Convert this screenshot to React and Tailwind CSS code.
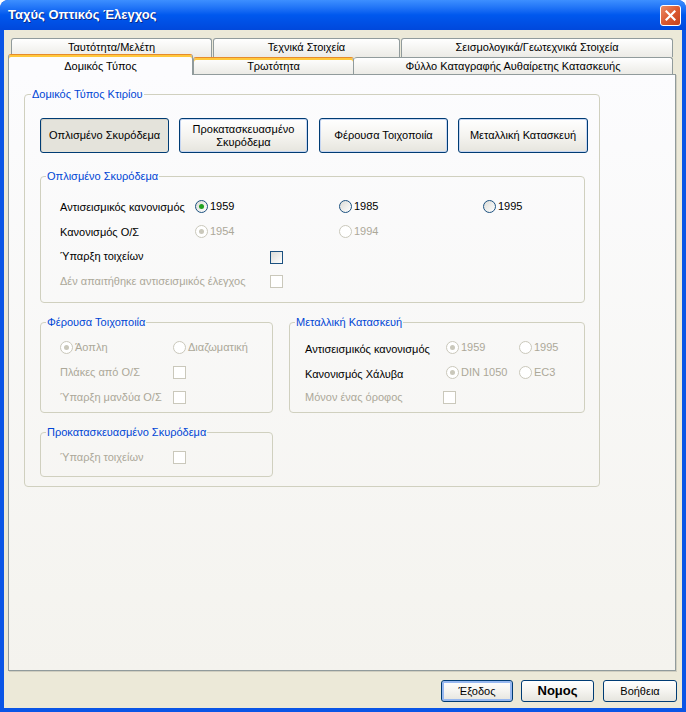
import React from "react";

function Radio({ checked, disabled, label, className = "" }) {
  return (
    <div className={`flex items-center ${className}`}>
      <span
        className={`w-[13px] h-[13px] rounded-full border flex items-center justify-center shrink-0 ${
          disabled
            ? "border-[#CAC8BB] bg-white"
            : "border-[#1C5180] bg-linear-to-br from-[#DCDCD7] to-white"
        }`}
      >
        {checked ? (
          <span
            className={`w-[5px] h-[5px] rounded-full ${
              disabled ? "bg-[#CAC8BB]" : "bg-[#21A121]"
            }`}
          />
        ) : null}
      </span>
      <span className={`ml-[2px] ${disabled ? "text-[#ACA899]" : "text-black"}`}>
        {label}
      </span>
    </div>
  );
}

function Check({ disabled }) {
  return (
    <span
      className={`block w-[13px] h-[13px] border shrink-0 ${
        disabled
          ? "border-[#CAC8BB] bg-white"
          : "border-[#1C5180] bg-linear-to-br from-[#DCDCD7] to-white"
      }`}
    />
  );
}

function Group({ title, className = "", children, legendClass = "ml-[5px]" }) {
  return (
    <fieldset className={`border border-[#D0D0BF] rounded-[4px] ${className}`}>
      <legend className={`${legendClass} px-[1px] text-[#0046D5] leading-[13px]`}>
        {title}
      </legend>
      {children}
    </fieldset>
  );
}

function Row({ children }) {
  return <div className="flex items-center h-[20px]">{children}</div>;
}

function BigButton({ children, pressed, className = "" }) {
  return (
    <div
      className={`h-[35px] shrink-0 flex items-center justify-center text-center leading-[13px] border border-[#003C74] rounded-[3px] ${
        pressed
          ? "bg-[#E4E3DB] shadow-[inset_1px_1px_0_#D2D0C6]"
          : "bg-linear-to-b from-white via-[#F5F4F0] to-[#E6E5DE] shadow-[inset_0_0_0_1px_#C6D6F2]"
      } ${className}`}
    >
      {children}
    </div>
  );
}

function Tab({ children, className = "" }) {
  return (
    <div
      className={`flex items-center justify-center border-t border-x border-[#919B9C] rounded-t-[3px] bg-linear-to-b from-white to-[#ECEBE6] ${className}`}
    >
      {children}
    </div>
  );
}

function SmallButton({ children, className = "" }) {
  return (
    <div
      className={`h-[22px] flex items-center justify-center border border-[#003C74] rounded-[3px] bg-linear-to-b from-white via-[#F5F4F0] to-[#E6E5DE] ${className}`}
    >
      {children}
    </div>
  );
}

export default function App() {
  return (
    <div className="w-[686px] h-[712px] flex flex-col bg-[#0A55E6] rounded-t-[8px] font-['Liberation_Sans',Arial,sans-serif] text-[11px] text-black overflow-hidden">
      {/* Title bar */}
      <div className="h-[30px] shrink-0 flex items-center justify-between pl-[8px] pr-[5px] rounded-t-[8px] bg-linear-to-b from-[#3D8FFF] via-[#0058EE] to-[#0048DC]">
        <span className="text-white font-bold text-[13px] [text-shadow:1px_1px_0_#0A2A8A]">
          Ταχύς Οπτικός Έλεγχος
        </span>
        <div className="w-[21px] h-[21px] rounded-[3px] border border-white bg-linear-to-br from-[#E98B66] via-[#DC5A30] to-[#C4421C] flex items-center justify-center">
          <svg width="11" height="11" viewBox="0 0 11 11">
            <path d="M1.5 1.5 L9.5 9.5 M9.5 1.5 L1.5 9.5" stroke="white" strokeWidth="2.2" strokeLinecap="square" />
          </svg>
        </div>
      </div>

      {/* Client area */}
      <div className="mx-[4px] mb-[4px] h-[678px] bg-[#ECE9D8] flex flex-col pt-[8px]">
        {/* Tab row 1 */}
        <div className="flex gap-[1px] pl-[7px] h-[19px]">
          <Tab className="w-[201px] h-[19px] pb-[2px]">Ταυτότητα/Μελέτη</Tab>
          <Tab className="w-[187px] h-[19px] pb-[2px]">Τεχνικά Στοιχεία</Tab>
          <Tab className="w-[272px] h-[19px] pb-[2px]">Σεισμολογικά/Γεωτεχνικά Στοιχεία</Tab>
        </div>
        {/* Tab row 2 */}
        <div className="flex items-end pl-[4px] h-[20px] -mt-[3px]">
          <div className="relative z-10 w-[185px] h-[21px] -mb-[1px] flex items-start justify-center pt-[3px] border-t border-x border-[#919B9C] border-t-[#E68B2C] rounded-t-[3px] bg-[#FCFCFE] shadow-[inset_0_2px_0_#FFC83C]">
            Δομικός Τύπος
          </div>
          <div className="w-[161px] h-[17px] flex items-center justify-center border-t border-x border-[#919B9C] border-t-[#E68B2C] rounded-t-[3px] bg-linear-to-b from-white to-[#ECEBE6] shadow-[inset_0_2px_0_#FFC83C]">
            Τρωτότητα
          </div>
          <div className="w-[319px] h-[17px] flex items-center justify-center border-t border-r border-[#919B9C] rounded-t-[3px] bg-linear-to-b from-white to-[#ECEBE6]">
            Φύλλο Καταγραφής Αυθαίρετης Κατασκευής
          </div>
        </div>

        {/* Panel */}
        <div className="ml-[4px] w-[668px] h-[597px] shrink-0 border border-[#919B9C] bg-linear-to-b from-[#FCFCFE] to-[#F4F3EE] shadow-[1px_1px_0_#D0CEC0] pl-[15px] pt-[13px]">
          <Group title="Δομικός Τύπος Κτιρίου" className="w-[576px]" legendClass="ml-[6px]">
            <div className="pl-[15px] pr-[14px] pt-[17px] pb-[9px]">
              <div className="flex gap-[10px] w-[545px]">
                <BigButton pressed className="w-[129px]">Οπλισμένο Σκυρόδεμα</BigButton>
                <BigButton className="w-[129px]">
                  Προκατασκευασμένο
                  <br />
                  Σκυρόδεμα
                </BigButton>
                <BigButton className="w-[129px] ml-[1px]">Φέρουσα Τοιχοποιία</BigButton>
                <BigButton className="w-[130px]">Μεταλλική Κατασκευή</BigButton>
              </div>

              <Group title="Οπλισμένο Σκυρόδεμα" className="mt-[17px] w-[545px]">
                <div className="pl-[19px] pt-[13px] pb-[11px] flex flex-col gap-[5px]">
                  <Row>
                    <span className="w-[135px] mt-[2px]">Αντισεισμικός κανονισμός</span>
                    <Radio checked label="1959" className="w-[144px]" />
                    <Radio label="1985" className="w-[144px]" />
                    <Radio label="1995" />
                  </Row>
                  <Row>
                    <span className="w-[135px] mt-[2px]">Κανονισμός Ο/Σ</span>
                    <Radio checked disabled label="1954" className="w-[144px]" />
                    <Radio disabled label="1994" />
                  </Row>
                  <Row>
                    <span className="w-[210px] mt-[1px]">Ύπαρξη τοιχείων</span>
                    <span className="mt-[2px]">
                      <Check />
                    </span>
                  </Row>
                  <Row>
                    <span className="w-[210px] text-[#ACA899]">Δέν απαιτήθηκε αντισεισμικός έλεγχος</span>
                    <Check disabled />
                  </Row>
                </div>
              </Group>

              <div className="flex items-start mt-[13px]">
                <div className="w-[233px] flex flex-col">
                  <Group title="Φέρουσα Τοιχοποιία" className="w-[233px]">
                    <div className="pl-[19px] pt-[8px] pb-[5px] flex flex-col gap-[5px]">
                      <Row>
                        <Radio checked disabled label="Άοπλη" className="w-[113px]" />
                        <Radio disabled label="Διαζωματική" />
                      </Row>
                      <Row>
                        <span className="w-[113px] text-[#ACA899]">Πλάκες από Ο/Σ</span>
                        <Check disabled />
                      </Row>
                      <Row>
                        <span className="w-[113px] text-[#ACA899]">Ύπαρξη μανδύα Ο/Σ</span>
                        <Check disabled />
                      </Row>
                    </div>
                  </Group>
                  <Group title="Προκατασκευασμένο Σκυρόδεμα" className="w-[233px] mt-[13px]">
                    <div className="pl-[19px] pt-[8px] pb-[9px]">
                      <Row>
                        <span className="w-[113px] text-[#ACA899]">Ύπαρξη τοιχείων</span>
                        <Check disabled />
                      </Row>
                    </div>
                  </Group>
                </div>

                <Group title="Μεταλλική Κατασκευή" className="w-[296px] ml-[16px]">
                  <div className="pl-[15px] pt-[8px] pb-[5px] flex flex-col gap-[5px]">
                    <Row>
                      <span className="w-[141px] mt-[4px]">Αντισεισμικός κανονισμός</span>
                      <Radio checked disabled label="1959" className="w-[73px]" />
                      <Radio disabled label="1995" />
                    </Row>
                    <Row>
                      <span className="w-[141px] mt-[4px]">Κανονισμός Χάλυβα</span>
                      <Radio checked disabled label="DIN 1050" className="w-[73px]" />
                      <Radio disabled label="EC3" />
                    </Row>
                    <Row>
                      <span className="w-[138px] text-[#ACA899]">Μόνον ένας όροφος</span>
                      <Check disabled />
                    </Row>
                  </div>
                </Group>
              </div>
            </div>
          </Group>
        </div>

        {/* Bottom buttons */}
        <div className="flex justify-end items-center gap-[8px] pr-[5px] mt-[9px]">
          <SmallButton className="w-[72px] shadow-[inset_0_0_0_2px_#97B8F0]">Έξοδος</SmallButton>
          <SmallButton className="w-[73px] font-bold text-[13px]">Νομος</SmallButton>
          <SmallButton className="w-[74px] ml-[1px]">Βοήθεια</SmallButton>
        </div>
      </div>
    </div>
  );
}
